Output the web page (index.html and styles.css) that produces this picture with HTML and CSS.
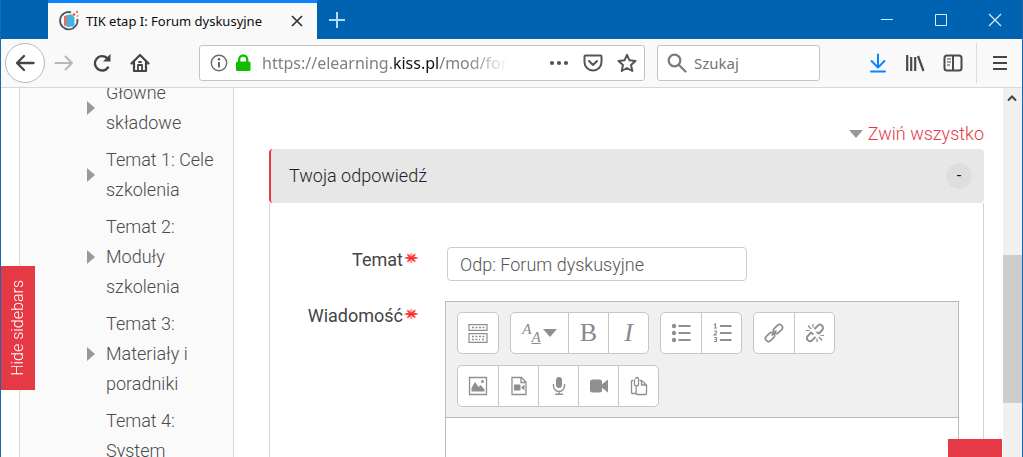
FILE: index.html
```html
<!DOCTYPE html>
<html lang="pl">
<head>
<meta charset="utf-8">
<title>TIK etap I: Forum dyskusyjne</title>
<link rel="stylesheet" href="styles.css">
</head>
<body>
<div class="window">
  <header class="titlebar">
    <div class="tab">
      <svg class="favicon" width="22" height="22" viewBox="0 0 22 22"><path d="M13 2.300A8.700 8.700 0 1 0 19.300 9" fill="none" stroke="#4b5563" stroke-width="1.800"/><path d="M6 6l7-1.500v10L6 16z" fill="#ee6a5f"/><path d="M8.500 5l5.500-.5 2.500 3v9l-8 .5z" fill="#45b3e0"/><circle cx="16" cy="4.500" r="1.300" fill="#e8543f"/><circle cx="19" cy="2" r="1" fill="#e8543f"/><circle cx="19.500" cy="6" r="1" fill="#f0a03c"/></svg>
      <span class="tab-title">TIK etap I: Forum dyskusyjne</span>
      <button class="plain" aria-label="Zamknij kartę"><svg width="12" height="12" viewBox="0 0 12 12" fill="none" stroke="#333" stroke-width="1.700"><path d="M1 1l10 10M11 1L1 11"/></svg></button>
    </div>
    <button class="plain new-tab" aria-label="Nowa karta"><svg width="18" height="18" viewBox="0 0 18 18" fill="none" stroke="#b5dcf7" stroke-width="2"><path d="M9 1v16M1 9h16"/></svg></button>
    <div class="window-controls">
      <button class="plain" aria-label="Minimalizuj"><svg width="14" height="14" viewBox="0 0 14 14" stroke="#d9ecfa"><path d="M1 6.500h12"/></svg></button>
      <button class="plain" aria-label="Maksymalizuj"><svg width="14" height="14" viewBox="0 0 14 14" fill="none" stroke="#d9ecfa"><path d="M1.500 1.500h11v11h-11z"/></svg></button>
      <button class="plain" aria-label="Zamknij"><svg width="14" height="14" viewBox="0 0 14 14" stroke="#d9ecfa" stroke-width="1.200"><path d="M1 1l12 12M13 1L1 13"/></svg></button>
    </div>
  </header>

  <nav class="navbar" aria-label="Pasek nawigacji">
    <button class="plain back" aria-label="Wstecz"><svg width="20" height="18" viewBox="0 0 20 18" fill="none" stroke="#454547" stroke-width="2.300" stroke-linecap="round" stroke-linejoin="round"><path d="M18.500 9H2M9 2L2 9l7 7"/></svg></button>
    <div class="nav-buttons">
      <button class="plain" aria-label="Dalej"><svg width="20" height="18" viewBox="0 0 20 18" fill="none" stroke="#b8b8b8" stroke-width="2" stroke-linecap="round" stroke-linejoin="round"><path d="M1.500 9H18M11.500 2.500L18 9l-6.500 6.500"/></svg></button>
      <button class="plain" aria-label="Odśwież"><svg width="20" height="20" viewBox="0 0 20 20"><path d="M16 14.500A7.200 7.200 0 1 1 15 5" fill="none" stroke="#454547" stroke-width="2.400" stroke-linecap="round"/><path d="M18.500 1v7.500H11z" fill="#454547"/></svg></button>
      <button class="plain" aria-label="Strona startowa"><svg width="20" height="20" viewBox="0 0 20 20" fill="none" stroke="#454547" stroke-width="2.200" stroke-linecap="round" stroke-linejoin="round"><path d="M1.500 10.500L10 2l8.500 8.500M4 9.500V18h12V9.500"/><path d="M8 18v-6h4v6M9 9h2" stroke-width="1.800"/></svg></button>
    </div>
    <div class="urlbar">
      <svg width="18" height="18" viewBox="0 0 18 18"><circle cx="9" cy="9" r="7.700" fill="none" stroke="#6a6a6a" stroke-width="1.400"/><path d="M9 8v5.500" stroke="#555" stroke-width="1.800"/><circle cx="9" cy="5.300" r="1.200" fill="#555"/></svg>
      <svg width="16" height="18" viewBox="0 0 16 18"><rect x="1" y="7.500" width="14.500" height="9.500" rx="1.500" fill="#12bc00"/><path d="M4.200 8V5.500a4 4 0 0 1 8 0V8" fill="none" stroke="#12bc00" stroke-width="2.300"/></svg>
      <div class="url">https://elearning.<b>kiss.pl</b>/mod/foru</div>
      <button class="plain" aria-label="Akcje strony"><svg width="20" height="6" viewBox="0 0 20 6" fill="#555"><circle cx="3" cy="3" r="2.100"/><circle cx="10" cy="3" r="2.100"/><circle cx="17" cy="3" r="2.100"/></svg></button>
      <button class="plain" aria-label="Pocket"><svg width="20" height="18" viewBox="0 0 20 18" fill="none" stroke="#555" stroke-width="2" stroke-linecap="round" stroke-linejoin="round"><path d="M2.500 1.500h15a1 1 0 0 1 1 1V8a8.500 8.500 0 0 1-17 0V2.500a1 1 0 0 1 1-1zM6 7l4 4 4-4"/></svg></button>
      <button class="plain" aria-label="Dodaj zakładkę"><svg width="20" height="20" viewBox="0 0 20 20" fill="none" stroke="#555" stroke-width="2" stroke-linejoin="round"><path d="M10 1.800l2.500 5.500 6 .7-4.500 4 1.300 6L10 15l-5.300 3L6 12 1.500 8l6-.7z"/></svg></button>
    </div>
    <label class="search">
      <svg width="20" height="20" viewBox="0 0 20 20" fill="none" stroke="#7b7b7b" stroke-width="2.200" stroke-linecap="round"><circle cx="7.500" cy="7.500" r="5.800"/><path d="M12 12l6.500 6.500"/></svg>
      <input type="text" placeholder="Szukaj" aria-label="Szukaj">
    </label>
    <div class="tools">
      <button class="plain" aria-label="Pobrane pliki"><svg width="18" height="20" viewBox="0 0 18 20" fill="none" stroke="#0a84ff" stroke-width="2" stroke-linecap="round" stroke-linejoin="round"><path d="M9 1.500V14M2.500 8L9 14.500 15.500 8M2 18.500h14"/></svg></button>
      <button class="plain" aria-label="Biblioteka"><svg width="20" height="18" viewBox="0 0 20 18" fill="none" stroke="#4a4a4c" stroke-width="2.200"><path d="M2.200 1v16M6.200 3v14M10.200 3v14M13 2l5.500 15"/></svg></button>
      <button class="plain" aria-label="Panel boczny"><svg width="20" height="18" viewBox="0 0 20 18" fill="none" stroke="#4a4a4c" stroke-width="2"><rect x="1.500" y="1.500" width="17" height="15" rx="2.500"/><path d="M10 2v14"/><path d="M4 5h4M4 8h4M4 11h3" stroke-width="1.200"/></svg></button>
    </div>
    <button class="plain menu" aria-label="Menu"><svg width="16" height="16" viewBox="0 0 16 16" stroke="#454547" stroke-width="2"><path d="M1 2h14M1 8h14M1 14h14"/></svg></button>
  </nav>

  <div class="viewport">
    <aside class="sidebar">
      <ul class="topics">
        <li><a href="#">Główne składowe</a></li>
        <li><a href="#">Temat 1: Cele szkolenia</a></li>
        <li><a href="#">Temat 2: Moduły szkolenia</a></li>
        <li><a href="#">Temat 3: Materiały i poradniki</a></li>
        <li class="pending"><a href="#">Temat 4: System</a></li>
      </ul>
    </aside>

    <main class="content">
      <a class="collapse" href="#">Zwiń wszystko</a>
      <form class="card">
        <div class="card-head">
          <h2>Twoja odpowiedź</h2>
          <button type="button" class="toggle" aria-label="Zwiń sekcję">-</button>
        </div>
        <div class="card-body">
          <div class="label-cell">
            <label for="subject">Temat</label>
            <svg class="req" width="16" height="12" viewBox="0 0 16 12"><use href="#star"/></svg>
          </div>
          <div class="field"><input class="subject" id="subject" type="text" value="Odp: Forum dyskusyjne"></div>

          <div class="label-cell message-label">
            <label for="message">Wiadomość</label>
            <svg class="req" width="16" height="12" viewBox="0 0 16 12"><g id="star"><path d="M1.500 6h13.500M4 2l8.500 8M12.500 2L4 10M8.200 1v10" stroke="#ff9a9a" stroke-width="2.200"/><path d="M3 6h10.500M5 3l6.500 6M11.500 3L5 9" stroke="#fb2a2a" stroke-width="1.600"/></g></svg>
          </div>
          <div class="editor">
            <div class="toolbar">
              <div class="group">
                <button type="button" aria-label="Więcej"><svg width="20" height="20" viewBox="0 0 20 20" fill="none" stroke="#8f8f8f" stroke-width="1.200"><path d="M1 1.600h18v5.800H1zM1 10.600h18v8.800H1z"/><path d="M4 4.500h13M4 13.500h13M4 16.500h8M14 16.500h3" stroke-width="1.600" stroke-dasharray="2 1.500"/></svg></button>
              </div>
              <div class="group">
                <button type="button" class="wide style-button" aria-label="Style akapitu"><i>A</i><i class="low">A</i><svg width="14" height="8" viewBox="0 0 14 8" fill="#8f8f8f"><path d="M0 0h14L7 8z"/></svg></button>
                <button type="button" class="letter" aria-label="Pogrubienie">B</button>
                <button type="button" class="letter" aria-label="Kursywa"><i>I</i></button>
              </div>
              <div class="group">
                <button type="button" aria-label="Lista nienumerowana"><svg width="20" height="20" viewBox="0 0 20 20" fill="#8f8f8f"><circle cx="3" cy="3" r="2.200"/><circle cx="3" cy="10" r="2.200"/><circle cx="3" cy="17" r="2.200"/><path d="M7.500 2h12v2h-12zM7.500 9h12v2h-12zM7.500 16h12v2h-12z"/></svg></button>
                <button type="button" aria-label="Lista numerowana"><svg width="20" height="20" viewBox="0 0 20 20" fill="none" stroke="#8f8f8f"><path d="M8 3h11.500M8 10h11.500M8 17h11.500" stroke-width="2"/><path d="M2 2l1.500-1v4M2 5h3M2 8h2.500v1.500L2 12h3M2 14.500h2.500v4H2M2.500 16.500h2" stroke-width="1.100"/></svg></button>
              </div>
              <div class="group">
                <button type="button" aria-label="Odnośnik"><svg width="20" height="20" viewBox="0 0 20 20" fill="none" stroke="#8f8f8f" stroke-width="1.700"><rect x="-5" y="-3" width="10" height="6" rx="2.800" transform="translate(14 6) rotate(-45)"/><rect x="-5" y="-3" width="10" height="6" rx="2.800" transform="translate(6 14) rotate(-45)"/><path d="M7.500 12.500l5-5"/></svg></button>
                <button type="button" aria-label="Usuń odnośnik"><svg width="20" height="20" viewBox="0 0 20 20" fill="none" stroke="#8f8f8f" stroke-width="1.900"><path d="M9.500 6l3-3.200a3 3 0 0 1 4.700 4.200L14 10.500 11.500 9M10.500 14l-3.200 3.200A3 3 0 0 1 2.800 13L6 9.500 8.500 11.500"/><path d="M8 1v3.500M3 2.500l3 3.500M1 7.500h3.500M12 15.500V19M14 14l3 3.500M15.500 12.500H19" stroke-width="1.200"/></svg></button>
              </div>
              <div class="group">
                <button type="button" aria-label="Obraz"><svg width="20" height="20" viewBox="0 0 20 20"><path d="M1.500 1.500h17v17h-17z" fill="none" stroke="#8f8f8f" stroke-width="1.300"/><path d="M3.500 15.500V12l3.500-6 3.500 5 2-2 4 4.500v2z" fill="#8f8f8f"/><circle cx="14.500" cy="5.500" r="1.500" fill="#8f8f8f"/></svg></button>
                <button type="button" aria-label="Multimedia"><svg width="18" height="20" viewBox="0 0 18 20"><path d="M2 1.500h9.500l4.500 4.500v12.500H2zM11 1.500V6.500h5" fill="none" stroke="#8f8f8f" stroke-width="1.300"/><path d="M4 8.500h6.500v6H4zM11 11.500l3.500-3v6z" fill="#8f8f8f"/></svg></button>
                <button type="button" aria-label="Nagraj dźwięk"><svg width="16" height="20" viewBox="0 0 16 20"><rect x="5" y="1" width="6" height="11" rx="3" fill="#8f8f8f"/><path d="M2.500 8v2a5.500 5.500 0 0 0 11 0V8M8 15.500V18M4 18.300h8" fill="none" stroke="#8f8f8f" stroke-width="1.400"/></svg></button>
                <button type="button" aria-label="Nagraj wideo"><svg width="20" height="16" viewBox="0 0 20 16" fill="#8f8f8f"><rect x="1" y="1.500" width="12" height="13" rx="2.500"/><path d="M12 7l7-5.500v13L12 9z"/></svg></button>
                <button type="button" aria-label="Zarządzaj plikami"><svg width="18" height="20" viewBox="0 0 18 20" fill="none" stroke="#8f8f8f" stroke-width="1.300" stroke-linejoin="round"><path d="M3.500 4.500H2.300a.8.8 0 0 0-.8.800v11.400a.8.800 0 0 0 .8.800H6M9.500 4.500h2l5 4.500v8.700a.8.8 0 0 1-.8.800H7a.8.800 0 0 1-.8-.8V11M11.500 4.500V9h5"/><path d="M4.500 3.500V8a2 2 0 0 0 4 0V3a1.500 1.500 0 0 0-3 0"/></svg></button>
              </div>
            </div>
            <textarea id="message"></textarea>
          </div>
        </div>
      </form>
    </main>

    <div class="scrollbar">
      <svg class="arrow" width="18" height="20" viewBox="0 0 18 20" fill="none" stroke="#444" stroke-width="2"><path d="M5 12.500L9 8.500l4 4"/></svg>
      <div class="before"></div>
      <div class="thumb"></div>
      <div class="after"></div>
    </div>

    <button class="hide-sidebars"><span>Hide sidebars</span></button>
    <button class="to-top" aria-label="Do góry"></button>
  </div>
</div>
</body>
</html>
```
FILE: styles.css
```css
* { box-sizing: border-box; }

html, body { height: 100%; margin: 0; }

body {
  font-family: Roboto, "Liberation Sans", sans-serif;
  font-weight: 300;
  font-size: 18px;
  line-height: 30px;
  color: #444;
}

svg { display: block; flex: none; }
input, textarea, button { font: inherit; color: inherit; }

.plain {
  display: flex;
  flex: none;
  align-items: center;
  justify-content: center;
  padding: 0;
  border: 0;
  background: none;
}

.window {
  display: flex;
  flex-direction: column;
  height: 100%;
  overflow: hidden;
  border: solid #1a68b0;
  border-width: 0 1px;
  background: #fff;
}

/* Title bar */
.titlebar {
  display: flex;
  flex: none;
  height: 39px;
  padding-left: 47px;
  background: #0063b1;
}

.tab {
  display: flex;
  align-items: center;
  width: 269px;
  padding: 0 14px 0 10px;
  border-top: 3px solid #0a84ff;
  background: #f9f9fa;
}

.tab-title {
  flex: 1;
  margin-left: 6px;
  font: 400 13px/20px "Noto Sans", sans-serif;
  color: #0c0c0d;
  white-space: nowrap;
}

.new-tab { width: 40px; }

.window-controls {
  display: flex;
  gap: 40px;
  margin-left: auto;
  padding-right: 20px;
}

/* Navigation bar */
.navbar {
  display: flex;
  flex: none;
  align-items: center;
  height: 49px;
  padding: 0 0 0 4px;
  border-bottom: 1px solid #d8d8d8;
  background: #f9f9fa;
}

.back {
  width: 40px;
  height: 40px;
  border: 1px solid #b8b8b8;
  border-radius: 50%;
  background: #fff;
}

.nav-buttons {
  display: flex;
  flex: none;
  gap: 18px;
  margin-left: 9px;
}

.urlbar, .search {
  display: flex;
  align-items: center;
  height: 36px;
  border: 1px solid #c4c4c4;
  border-radius: 3px;
  background: #fff;
  font: 400 16px/24px "Noto Sans", sans-serif;
}

.urlbar {
  flex: 1;
  gap: 14px;
  min-width: 0;
  margin-left: 49px;
  padding: 0 7px 0 10px;
}

.urlbar svg + svg { margin-left: -7px; }

.url {
  flex: 1;
  min-width: 0;
  margin-left: -3px;
  margin-right: 27px;
  overflow: hidden;
  color: #808080;
  white-space: nowrap;
  mask-image: linear-gradient(to left, transparent, #000 40px);
}

.url b { font-weight: 400; color: #111; }

.search {
  flex: none;
  gap: 7px;
  width: 163px;
  margin-left: 12px;
  padding-left: 9px;
  font-size: 15px;
}

.search input {
  flex: 1;
  width: 0;
  padding: 0;
  border: 0;
  background: none;
  outline: 0;
}

.search input::placeholder { color: #737373; opacity: 1; }

.tools {
  display: flex;
  flex: none;
  gap: 18px;
  margin-left: 49px;
  padding-right: 13px;
}

.menu {
  height: 40px;
  width: 46px;
  border-left: 1px solid #dcdcdc;
}

/* Page */
.viewport {
  position: relative;
  display: flex;
  flex: 1;
  min-height: 0;
  overflow: hidden;
}

.sidebar {
  flex: none;
  width: 215px;
  margin-left: 18px;
  border: solid #d9d9d9;
  border-width: 0 1px;
  background: #fafafa;
}

.topics {
  display: flex;
  flex-direction: column;
  gap: 7px;
  margin: -10px 0 0;
  padding: 0 16px 0 67px;
  list-style: none;
}

.topics li {
  display: flex;
  align-items: center;
  gap: 11px;
}

.topics li::before {
  content: "";
  border: solid transparent;
  border-width: 7px 0 7px 8px;
  border-left-color: #999;
}

.topics .pending::before { visibility: hidden; }

.topics a {
  flex: 1;
  color: #4a4a4a;
  text-decoration: none;
}

.content {
  display: flex;
  flex: 1;
  flex-direction: column;
  min-width: 0;
  padding: 31px 19px 0 35px;
}

.collapse {
  display: flex;
  align-items: center;
  align-self: flex-end;
  gap: 5px;
  color: #e63946;
  text-decoration: none;
}

.collapse::before {
  content: "";
  border: solid transparent;
  border-width: 8px 7px 0;
  border-top-color: #999;
}

.card {
  display: flex;
  flex: 1;
  flex-direction: column;
}

.card-head {
  display: flex;
  align-items: center;
  justify-content: space-between;
  height: 54px;
  padding: 0 12px 0 18px;
  border-left: 2px solid #e63946;
  border-radius: 4px;
  background: #e7e7e7;
}

.card-head h2 {
  margin: 0;
  font-size: 18px;
  font-weight: 300;
  color: #222;
}

.toggle {
  width: 26px;
  height: 26px;
  padding: 0;
  border: 0;
  border-radius: 50%;
  background: #dedede;
  color: #111;
  font-size: 16px;
  font-weight: 400;
  line-height: 26px;
}

.card-body {
  display: grid;
  flex: 1;
  grid-template-columns: 149px 1fr;
  grid-template-rows: auto 1fr;
  column-gap: 26px;
  row-gap: 20px;
  padding: 44px 24px 0 0;
  border: solid #d4d4d4;
  border-width: 0 1px;
}

.label-cell {
  display: flex;
  align-items: flex-start;
  justify-content: flex-end;
  font-weight: 400;
  line-height: 26px;
}

.message-label { padding-top: 2px; }

.req { margin-top: 5px; }

.field { display: flex; padding-left: 2px; }

.subject {
  width: 300px;
  height: 34px;
  padding: 0 12px;
  border: 1px solid #ccc;
  border-radius: 4px;
  background: #fff;
  color: #555;
}

.editor {
  display: flex;
  flex-direction: column;
  border: 1px solid #b9b9b9;
  border-bottom: 0;
}

.toolbar {
  display: flex;
  flex-wrap: wrap;
  gap: 11px;
  padding: 10px 11px;
  border-bottom: 1px solid #b9b9b9;
  background: #f0f0f0;
}

.group {
  display: flex;
  height: 42px;
  border: 1px solid #c6c6c6;
  border-radius: 5px;
  background: #fff;
}

.group button {
  display: flex;
  align-items: center;
  justify-content: center;
  width: 40px;
  padding: 0;
  border: 0;
  background: none;
  color: #8a8a8a;
}

.group button + button { border-left: 1px solid #c6c6c6; }
.group .wide { width: 57px; }

.group .letter, .style-button {
  font: 400 26px/30px "Liberation Serif", serif;
}

.group .style-button { font-size: 15px; }
.style-button i { padding-bottom: 8px; line-height: 16px; }
.style-button .low { margin: 8px 2px 0 0; padding: 0; text-decoration: underline; }

#message {
  flex: 1;
  min-height: 40px;
  padding: 12px;
  border: 0;
  outline: 0;
  resize: none;
}

.scrollbar {
  display: flex;
  flex: none;
  flex-direction: column;
  width: 19px;
  background: #f0f0f0;
}

.before { flex: 147; }
.thumb { flex: 148; background: #cdcdcd; }
.after { flex: 54; }

/* Overlays on the page */
.hide-sidebars {
  position: absolute;
  top: 178px;
  left: 0;
  padding: 14px 5px;
  border: 0;
  background: #e63946;
  color: #fff;
  font-size: 16px;
  line-height: 24px;
}

.hide-sidebars span {
  display: block;
  writing-mode: vertical-rl;
  transform: rotate(180deg);
}

.to-top {
  position: absolute;
  right: 20px;
  bottom: 0;
  width: 54px;
  height: 18px;
  border: 0;
  background: #e63946;
}
```
